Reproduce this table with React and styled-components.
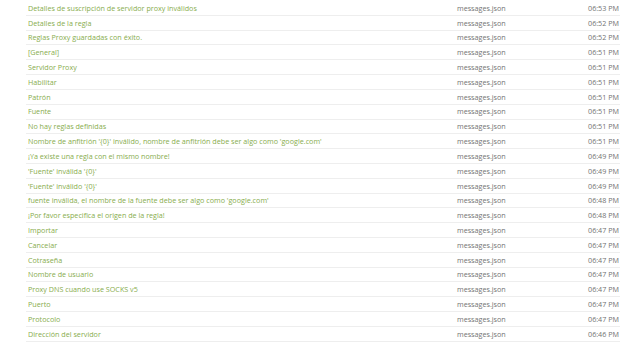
import { createGlobalStyle } from "styled-components";
import styled from "styled-components";

const GlobalStyle = createGlobalStyle`
  body {
    margin: 0;
    background: #fff;
    font-family: "Open Sans", "Liberation Sans", sans-serif;
  }
`;

const List = styled.div`
  margin: 1px 0 0 26px;
  width: 594px;
`;

const Row = styled.div`
  display: grid;
  grid-template-columns: 428px 1fr 60px;
  align-items: center;
  height: 14.82px;
  padding-top: 1px;
  box-sizing: border-box;
  border-bottom: 1px solid #eeeeee;
  font-size: 7.2px;
  line-height: 1;
`;

const Message = styled.span`
  padding-left: 2px;
  color: #88ad4e;
  white-space: nowrap;
`;

const File = styled.span`
  padding-left: 3px;
  color: #737373;
`;

const Time = styled.span`
  padding-right: 1px;
  text-align: right;
  color: #737373;
`;

const rows = [
  ["Detalles de suscripción de servidor proxy inválidos", "06:53 PM"],
  ["Detalles de la regla", "06:52 PM"],
  ["Reglas Proxy guardadas con éxito.", "06:52 PM"],
  ["[General]", "06:51 PM"],
  ["Servidor Proxy", "06:51 PM"],
  ["Habilitar", "06:51 PM"],
  ["Patrón", "06:51 PM"],
  ["Fuente", "06:51 PM"],
  ["No hay reglas definidas", "06:51 PM"],
  ["Nombre de anfitrión '{0}' inválido, nombre de anfitrión debe ser algo como 'google.com'", "06:51 PM"],
  ["¡Ya existe una regla con el mismo nombre!", "06:49 PM"],
  ["'Fuente' inválida '{0}'", "06:49 PM"],
  ["'Fuente' inválido '{0}'", "06:49 PM"],
  ["fuente inválida, el nombre de la fuente debe ser algo como 'google.com'", "06:48 PM"],
  ["¡Por favor especifica el origen de la regla!", "06:48 PM"],
  ["Importar", "06:47 PM"],
  ["Cancelar", "06:47 PM"],
  ["Cotraseña", "06:47 PM"],
  ["Nombre de usuario", "06:47 PM"],
  ["Proxy DNS cuando use SOCKS v5", "06:47 PM"],
  ["Puerto", "06:47 PM"],
  ["Protocolo", "06:47 PM"],
  ["Dirección del servidor", "06:46 PM"],
];

const App = () => {
  return (
    <>
      <GlobalStyle />
      <List>
        {rows.map(([text, time], i) => (
          <Row key={i}>
            <Message>{text}</Message>
            <File>messages.json</File>
            <Time>{time}</Time>
          </Row>
        ))}
      </List>
    </>
  );
};
export default App;
